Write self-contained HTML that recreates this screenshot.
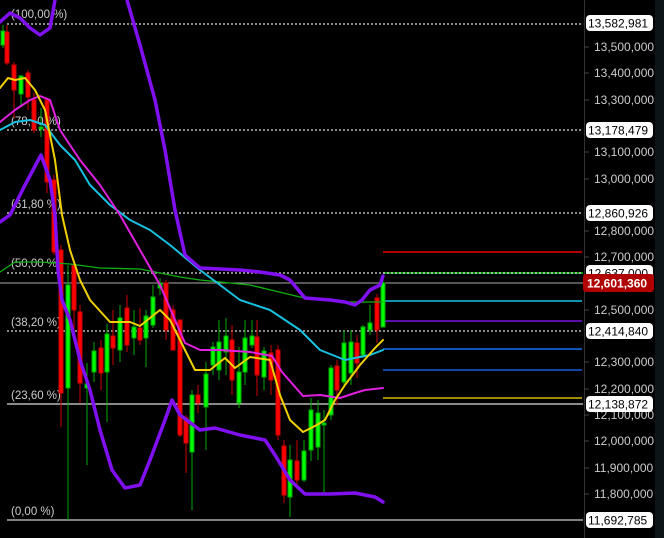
<!DOCTYPE html>
<html><head><meta charset="utf-8"><style>
html,body{margin:0;padding:0;background:#000;}
body{width:664px;height:538px;overflow:hidden;position:relative;font-family:"Liberation Sans",sans-serif;}
svg{position:absolute;left:0;top:0;}
</style></head><body>
<svg width="664" height="538" viewBox="0 0 664 538" xmlns="http://www.w3.org/2000/svg">
<rect width="664" height="538" fill="#000"/>
<rect x="655" y="0" width="9" height="538" fill="#0c1418"/>
<line x1="584.5" y1="0" x2="584.5" y2="538" stroke="#333" stroke-width="1"/>
<g stroke="#444" stroke-width="1">
<line x1="584" y1="47" x2="589" y2="47"/><line x1="584" y1="73" x2="589" y2="73"/><line x1="584" y1="100" x2="589" y2="100"/><line x1="584" y1="152" x2="589" y2="152"/><line x1="584" y1="179" x2="589" y2="179"/><line x1="584" y1="231" x2="589" y2="231"/><line x1="584" y1="257" x2="589" y2="257"/><line x1="584" y1="310" x2="589" y2="310"/><line x1="584" y1="362" x2="589" y2="362"/><line x1="584" y1="389" x2="589" y2="389"/><line x1="584" y1="415" x2="589" y2="415"/><line x1="584" y1="441" x2="589" y2="441"/><line x1="584" y1="468" x2="589" y2="468"/><line x1="584" y1="494" x2="589" y2="494"/>
</g>
<g stroke="#ddd" stroke-width="1.3" stroke-dasharray="2,2">
<line x1="7" y1="24" x2="583" y2="24"/>
<line x1="7" y1="130" x2="583" y2="130"/>
<line x1="7" y1="213" x2="583" y2="213"/>
<line x1="7" y1="273" x2="383" y2="273"/>
<line x1="7" y1="331" x2="583" y2="331"/>
</g>
<line x1="383" y1="273" x2="583" y2="273" stroke="#0f0" stroke-width="1.3"/>
<line x1="383" y1="273" x2="583" y2="273" stroke="#fff" stroke-width="1.3" stroke-dasharray="2,2"/>
<line x1="0" y1="283" x2="583" y2="283" stroke="#aaa" stroke-width="1"/>
<line x1="7" y1="404" x2="583" y2="404" stroke="#ddd" stroke-width="1.3"/>
<line x1="7" y1="520" x2="583" y2="520" stroke="#ccc" stroke-width="1.3"/>
<g stroke-width="1.8">
<line x1="383" y1="252" x2="582" y2="252" stroke="#c00"/>
<line x1="383" y1="301" x2="582" y2="301" stroke="#10a8c8"/>
<line x1="383" y1="321" x2="582" y2="321" stroke="#6a10c0"/>
<line x1="383" y1="349" x2="582" y2="349" stroke="#1060d0"/>
<line x1="383" y1="370" x2="582" y2="370" stroke="#1050c0"/>
<line x1="383" y1="398" x2="582" y2="398" stroke="#b8a000"/>
</g>
<g font-size="11.5" fill="#ccc">
<text x="11" y="18">(100,00 %)</text>
<text x="11" y="125">(78,60 %)</text>
<text x="11" y="208">(61,80 %)</text>
<text x="11" y="267">(50,00 %)</text>
<text x="11" y="326">(38,20 %)</text>
<text x="11" y="399">(23,60 %)</text>
<text x="11" y="515">(0,00 %)</text>
</g>
<g stroke-width="1">
<g fill="#0f0" stroke="#0a0">
<line x1="3" y1="25" x2="3" y2="48"/><rect x="1" y="31" width="4" height="14"/>
<line x1="21" y1="75" x2="21" y2="105"/><rect x="19" y="76" width="4" height="18"/>
<line x1="41" y1="108" x2="41" y2="137"/><rect x="39" y="127" width="4" height="2"/>
<line x1="68" y1="265" x2="68" y2="520"/><rect x="66" y="285" width="4" height="103"/>
<line x1="87" y1="363" x2="87" y2="465"/><rect x="85" y="384" width="4" height="4"/>
<line x1="94" y1="342" x2="94" y2="382"/><rect x="92" y="351" width="4" height="21"/>
<line x1="107" y1="324" x2="107" y2="422"/><rect x="105" y="334" width="4" height="38"/>
<line x1="120" y1="305" x2="120" y2="362"/><rect x="118" y="318" width="4" height="32"/>
<line x1="134" y1="310" x2="134" y2="355"/><rect x="132" y="327" width="4" height="11"/>
<line x1="146" y1="310" x2="146" y2="367"/><rect x="144" y="316" width="4" height="22"/>
<line x1="153" y1="285" x2="153" y2="328"/><rect x="151" y="297" width="4" height="28"/>
<line x1="160" y1="278" x2="160" y2="295"/><rect x="158" y="283" width="4" height="5"/>
<line x1="192" y1="390" x2="192" y2="510"/><rect x="190" y="395" width="4" height="57"/>
<line x1="206" y1="362" x2="206" y2="450"/><rect x="204" y="374" width="4" height="33"/>
<line x1="213" y1="342" x2="213" y2="375"/><rect x="211" y="347" width="4" height="18"/>
<line x1="219" y1="320" x2="219" y2="380"/><rect x="217" y="342" width="4" height="28"/>
<line x1="226" y1="318" x2="226" y2="375"/><rect x="224" y="336" width="4" height="16"/>
<line x1="239" y1="347" x2="239" y2="408"/><rect x="237" y="372" width="4" height="31"/>
<line x1="245" y1="320" x2="245" y2="385"/><rect x="243" y="338" width="4" height="34"/>
<line x1="252" y1="320" x2="252" y2="348"/><rect x="250" y="336" width="4" height="9"/>
<line x1="264" y1="347" x2="264" y2="390"/><rect x="262" y="351" width="4" height="26"/>
<line x1="290" y1="445" x2="290" y2="517"/><rect x="288" y="460" width="4" height="37"/>
<line x1="304" y1="440" x2="304" y2="482"/><rect x="302" y="451" width="4" height="29"/>
<line x1="311" y1="398" x2="311" y2="461"/><rect x="309" y="410" width="4" height="40"/>
<line x1="318" y1="400" x2="318" y2="460"/><rect x="316" y="413" width="4" height="34"/>
<line x1="324" y1="410" x2="324" y2="495"/><rect x="322" y="423" width="4" height="2"/>
<line x1="331" y1="365" x2="331" y2="420"/><rect x="329" y="368" width="4" height="47"/>
<line x1="344" y1="330" x2="344" y2="388"/><rect x="342" y="343" width="4" height="39"/>
<line x1="351" y1="330" x2="351" y2="385"/><rect x="349" y="342" width="4" height="31"/>
<line x1="363" y1="325" x2="363" y2="358"/><rect x="361" y="327" width="4" height="28"/>
<line x1="370" y1="305" x2="370" y2="335"/><rect x="368" y="323" width="4" height="7"/>
<line x1="383" y1="278" x2="383" y2="327"/><rect x="381" y="283" width="4" height="44"/>
</g>
<g fill="#f00" stroke="#c00">
<line x1="7" y1="25" x2="7" y2="65"/><rect x="5" y="32" width="4" height="31"/>
<line x1="14" y1="62" x2="14" y2="118"/><rect x="12" y="65" width="4" height="25"/>
<line x1="28" y1="70" x2="28" y2="110"/><rect x="26" y="73" width="4" height="24"/>
<line x1="34" y1="93" x2="34" y2="133"/><rect x="32" y="100" width="4" height="30"/>
<line x1="47" y1="100" x2="47" y2="193"/><rect x="45" y="100" width="4" height="82"/>
<line x1="54" y1="175" x2="54" y2="255"/><rect x="52" y="180" width="4" height="72"/>
<line x1="61" y1="245" x2="61" y2="427"/><rect x="59" y="250" width="4" height="143"/>
<line x1="74" y1="265" x2="74" y2="330"/><rect x="72" y="265" width="4" height="45"/>
<line x1="80" y1="305" x2="80" y2="403"/><rect x="78" y="312" width="4" height="71"/>
<line x1="101" y1="340" x2="101" y2="390"/><rect x="99" y="348" width="4" height="25"/>
<line x1="113" y1="310" x2="113" y2="365"/><rect x="111" y="336" width="4" height="12"/>
<line x1="127" y1="295" x2="127" y2="352"/><rect x="125" y="308" width="4" height="37"/>
<line x1="140" y1="308" x2="140" y2="345"/><rect x="138" y="328" width="4" height="12"/>
<line x1="166" y1="280" x2="166" y2="340"/><rect x="164" y="283" width="4" height="47"/>
<line x1="173" y1="305" x2="173" y2="350"/><rect x="171" y="310" width="4" height="40"/>
<line x1="180" y1="320" x2="180" y2="437"/><rect x="178" y="320" width="4" height="115"/>
<line x1="186" y1="415" x2="186" y2="473"/><rect x="184" y="418" width="4" height="25"/>
<line x1="198" y1="385" x2="198" y2="413"/><rect x="196" y="395" width="4" height="8"/>
<line x1="232" y1="325" x2="232" y2="395"/><rect x="230" y="340" width="4" height="40"/>
<line x1="257" y1="320" x2="257" y2="396"/><rect x="255" y="337" width="4" height="38"/>
<line x1="271" y1="345" x2="271" y2="395"/><rect x="269" y="353" width="4" height="27"/>
<line x1="278" y1="345" x2="278" y2="440"/><rect x="276" y="350" width="4" height="85"/>
<line x1="284" y1="440" x2="284" y2="503"/><rect x="282" y="446" width="4" height="49"/>
<line x1="297" y1="440" x2="297" y2="485"/><rect x="295" y="461" width="4" height="19"/>
<line x1="337" y1="360" x2="337" y2="405"/><rect x="335" y="366" width="4" height="24"/>
<line x1="357" y1="335" x2="357" y2="378"/><rect x="355" y="343" width="4" height="20"/>
<line x1="377" y1="294" x2="377" y2="343"/><rect x="375" y="298" width="4" height="32"/>
</g>
</g>
<g fill="none" stroke-linejoin="round" stroke-linecap="round">
<polyline stroke="#10b010" stroke-width="1.3" points="0,272 15,262 40,262 70,264 100,268 140,269 180,277 200,280 250,285 300,297 340,302 383,302"/>
<polyline stroke="#18c0e0" stroke-width="2" points="0,130 15,122 30,120 45,125 60,145 75,160 90,185 110,205 130,220 150,230 170,245 200,270 240,300 270,310 300,330 320,350 345,360 370,355 383,350"/>
<polyline stroke="#e020e0" stroke-width="2" points="0,122 15,110 30,100 40,96 50,100 60,130 80,160 100,185 120,215 140,250 160,285 185,343 200,350 220,350 250,352 272,356 282,372 303,396 320,395 340,398 355,393 365,390 383,388"/>
<polyline stroke="#f0d000" stroke-width="2" points="0,88 8,78 15,80 25,78 35,90 45,110 55,160 62,215 70,250 80,280 90,300 110,322 130,322 140,326 150,318 160,310 170,320 180,340 195,370 210,370 225,358 235,368 250,357 270,360 280,395 290,420 303,432 315,426 325,420 335,400 345,385 360,365 375,348 383,340"/>
<polyline stroke="#8010f0" stroke-width="3.5" points="0,22 10,13 20,18 30,28 40,35 50,28 55,0"/>
<polyline stroke="#8010f0" stroke-width="3.5" points="127,0 140,45 155,100 165,150 175,210 185,255 193,262 200,268 240,270 260,272 280,275 290,280 305,298 330,300 345,302 355,305 362,300 370,290 380,285 383,276"/>
<polyline stroke="#8010f0" stroke-width="3.5" points="0,222 10,215 25,185 41,155 50,180 55,215 58,270 62,300 70,320 80,360 90,390 100,430 112,470 125,488 140,485 150,460 165,420 172,400 180,415 200,430 215,428 240,435 265,440 275,455 290,480 305,494 330,494 355,493 375,497 383,502"/>
</g>
<g font-size="12" fill="#ccc">
<text x="594" y="51">13,500,000</text><text x="594" y="77">13,400,000</text><text x="594" y="104">13,300,000</text>
<text x="594" y="156">13,100,000</text><text x="594" y="183">13,000,000</text>
<text x="594" y="235">12,800,000</text><text x="594" y="261">12,700,000</text>
<text x="594" y="314">12,500,000</text><text x="594" y="366">12,300,000</text><text x="594" y="393">12,200,000</text>
<text x="594" y="419">12,100,000</text><text x="594" y="445">12,000,000</text><text x="594" y="472">11,900,000</text>
<text x="594" y="498">11,800,000</text>
</g>
<g font-size="12" fill="#000">
<rect x="586" y="15" width="67" height="16" rx="4" fill="#fff"/><text x="588" y="27.5">13,582,981</text>
<rect x="586" y="122" width="67" height="16" rx="4" fill="#fff"/><text x="588" y="134.5">13,178,479</text>
<rect x="586" y="205" width="67" height="16" rx="4" fill="#fff"/><text x="588" y="217.5">12,860,926</text>
<rect x="586" y="265" width="67" height="16" rx="4" fill="#fff"/><text x="588" y="277.5">12,637,000</text>
<rect x="586" y="323" width="67" height="16" rx="4" fill="#fff"/><text x="588" y="335.5">12,414,840</text>
<rect x="586" y="396" width="67" height="16" rx="4" fill="#fff"/><text x="588" y="408.5">12,138,872</text>
<rect x="586" y="512" width="67" height="16" rx="4" fill="#fff"/><text x="588" y="524.5">11,692,785</text>
</g>
<rect x="583" y="274" width="71" height="18" rx="3" fill="#b00000"/>
<text x="587" y="287.5" font-size="12" font-weight="bold" fill="#fff">12,601,360</text>
</svg>
</body></html>
